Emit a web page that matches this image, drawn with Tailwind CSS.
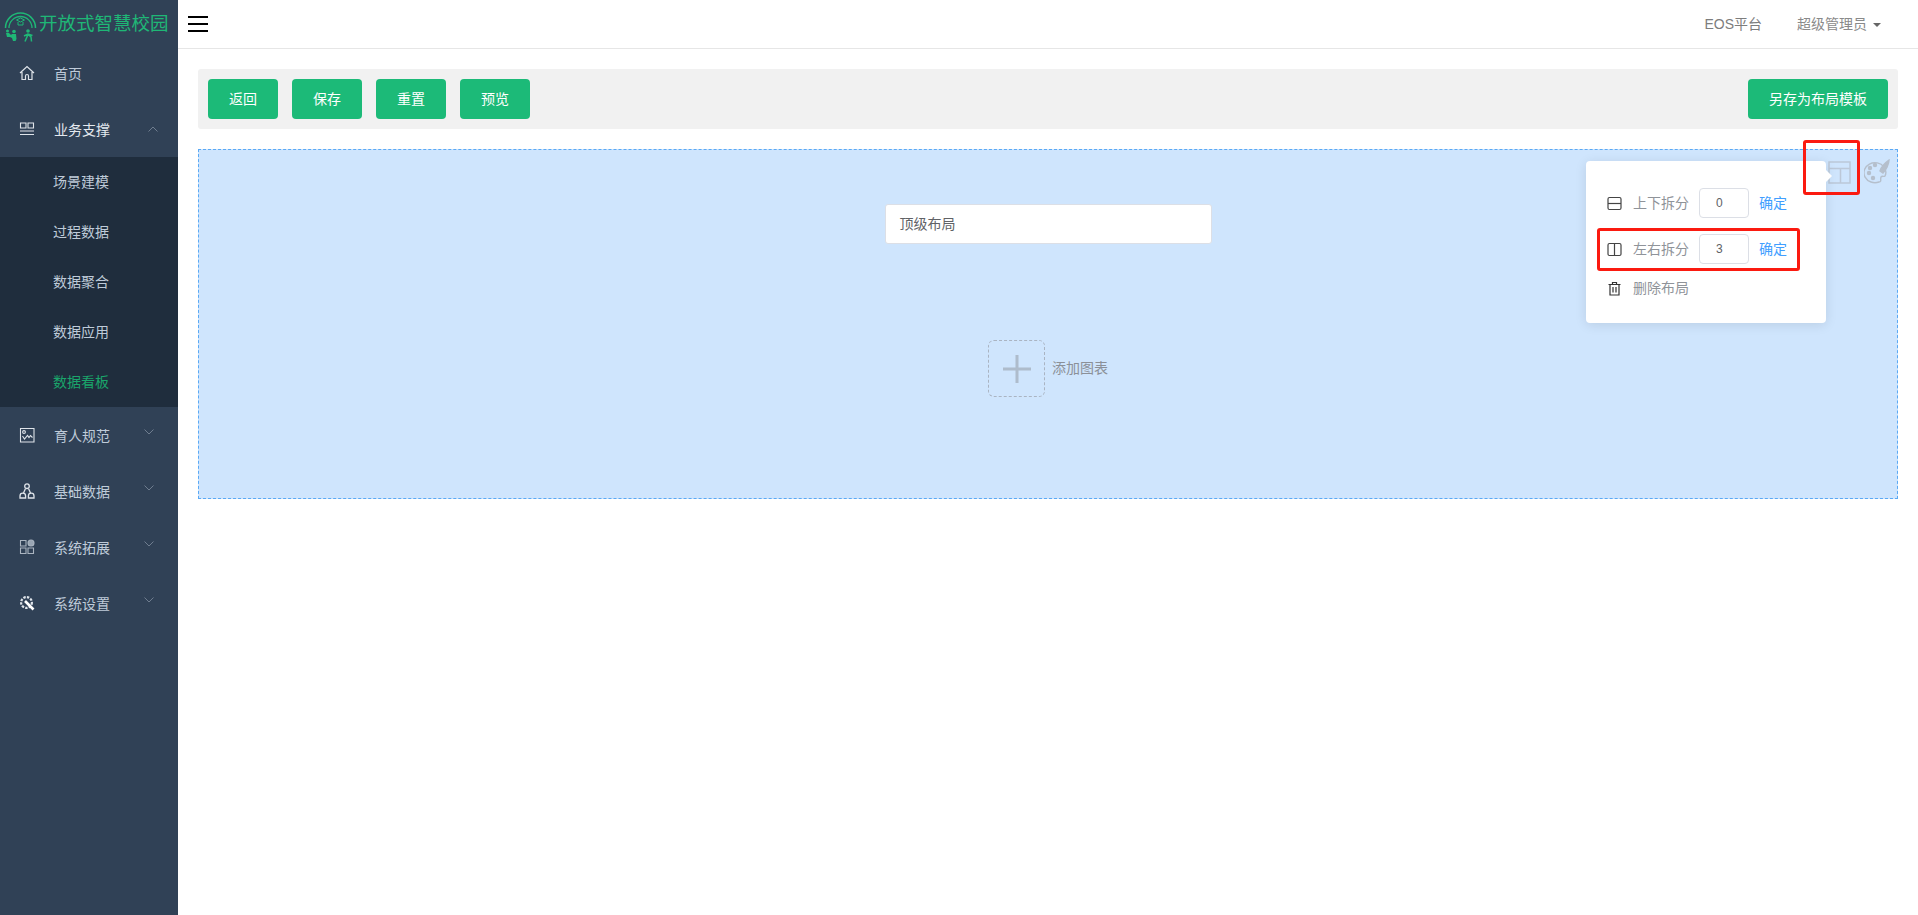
<!DOCTYPE html>
<html lang="zh-CN">

<head>
  <meta charset="UTF-8">
  <title>开放式智慧校园</title>
  <script src="https://cdn.jsdelivr.net/npm/@tailwindcss/browser@4"></script>
</head>

<body class="bg-white font-['Liberation_Sans','Noto_Sans_CJK_SC',sans-serif] text-sm overflow-hidden">
  <div class="flex h-[915px] w-[1918px]">

    <!-- sidebar -->
    <aside class="w-[178px] shrink-0 bg-[#304156] text-[#bfcbd9]">
      <div class="h-[45px] flex items-center pl-1 overflow-hidden">
        <svg class="w-[34px] h-[34px] shrink-0 mt-[5px]" viewBox="0 0 34 34" fill="none" stroke="#1fb776">
          <path d="M1.500 20A15 15 0 1 1 31.500 20" stroke-width="1.500" />
          <path d="M5 20A11.500 11.500 0 1 1 28 20" stroke-width="1.300" />
          <path d="M12.500 12l4-2 4 2-4 2zM14 14v3h5v-3" stroke-width="1" />
          <circle cx="3.500" cy="23" r="1.500" fill="#1fb776" stroke="none" />
          <circle cx="10" cy="23.500" r="1.800" fill="#1fb776" stroke="none" />
          <path d="M2 25h3l2 2 1-1h4l.5 5-1 2H9l-1-3-2-1H3z" fill="#1fb776" stroke="none" />
          <circle cx="24" cy="23" r="1.800" fill="#1fb776" stroke="none" />
          <path d="M21 33.500l3-7 3 2.500 .5 4.500M20 28l4-2 4.500 1.500" stroke-width="1.500" />
        </svg>
        <span class="text-[#1fb776] text-[18.5px] leading-none whitespace-nowrap ml-[1px] mt-[3px]">开放式智慧校园</span>
      </div>

      <a class="h-14 flex items-center pl-[19px]">
        <svg class="w-[16px] h-[16px] mr-[19px]" viewBox="0 0 16 16" fill="none" stroke="#dfe4ea" stroke-width="1.2">
          <path d="M1 8l7-6.500L15 8M3 7v7.500h3.500V11a1.500 1.500 0 0 1 3 0v3.500H13V7" />
        </svg>
        <span class="pt-[2px]">首页</span>
      </a>

      <a class="h-14 flex items-center pl-[19px] relative text-[#e4e9ef]">
        <svg class="w-[16px] h-[16px] mr-[19px]" viewBox="0 0 16 16" fill="none" stroke="#dfe4ea" stroke-width="1.1">
          <path d="M1.500 2h5.500v5H1.500zM9 2h5.500v5H9zM1 10h14M1 13.500h14" />
        </svg>
        <span class="pt-[2px]">业务支撑</span>
        <svg class="absolute left-[148px] top-[25px] w-[10px] h-[6px]" viewBox="0 0 10 6" fill="none" stroke="#6f7d8f" stroke-width="1">
          <path d="M.5 5.500L5 1l4.500 4.500" />
        </svg>
      </a>

      <div class="bg-[#1f2d3d]">
        <a class="h-[50px] flex items-center pl-[53px]">场景建模</a>
        <a class="h-[50px] flex items-center pl-[53px]">过程数据</a>
        <a class="h-[50px] flex items-center pl-[53px]">数据聚合</a>
        <a class="h-[50px] flex items-center pl-[53px]">数据应用</a>
        <a class="h-[50px] flex items-center pl-[53px] text-[#1aa56b]">数据看板</a>
      </div>

      <a class="h-14 flex items-center pl-[19px] relative">
        <svg class="w-[16px] h-[16px] mr-[19px]" viewBox="0 0 16 16" fill="none" stroke="#dfe4ea" stroke-width="1.1">
          <path d="M1.500 1.500h13.500v13.500H1.500z" />
          <circle cx="5" cy="5" r="1.400" />
          <path d="M3.500 9l2 3 3-3.500 1.500 2 1.500-2 2 2" />
        </svg>
        <span class="pt-[2px]">育人规范</span>
        <svg class="absolute left-[144px] top-[22px] w-[10px] h-[6px]" viewBox="0 0 10 6" fill="none" stroke="#6f7d8f" stroke-width="1">
          <path d="M.5.500L5 5l4.500-4.500" />
        </svg>
      </a>

      <a class="h-14 flex items-center pl-[19px] relative">
        <svg class="w-[16px] h-[16px] mr-[19px]" viewBox="0 0 16 16" fill="none" stroke="#dfe4ea" stroke-width="1.3">
          <circle cx="8" cy="3.200" r="2.300" />
          <path d="M1 15v-2a2.800 2.800 0 0 1 5.600 0v2zM9.400 15v-2a2.800 2.800 0 0 1 5.600 0v2z" />
          <path d="M6.500 5.500L4.500 10M9.500 5.500l2 4.500" />
        </svg>
        <span class="pt-[2px]">基础数据</span>
        <svg class="absolute left-[144px] top-[22px] w-[10px] h-[6px]" viewBox="0 0 10 6" fill="none" stroke="#6f7d8f" stroke-width="1">
          <path d="M.5.500L5 5l4.500-4.500" />
        </svg>
      </a>

      <a class="h-14 flex items-center pl-[19px] relative">
        <svg class="w-[16px] h-[16px] mr-[19px]" viewBox="0 0 16 16" fill="none" stroke="#aab4c0" stroke-width="1.100">
          <path d="M1.500 1.500h5.500v5.500H1.500zM1.500 9h5.500v5.500H1.500zM9 9h5.500v5.500H9z" />
          <circle cx="12" cy="4" r="3" fill="#9aa6b4" />
        </svg>
        <span class="pt-[2px]">系统拓展</span>
        <svg class="absolute left-[144px] top-[22px] w-[10px] h-[6px]" viewBox="0 0 10 6" fill="none" stroke="#6f7d8f" stroke-width="1">
          <path d="M.5.500L5 5l4.500-4.500" />
        </svg>
      </a>

      <a class="h-14 flex items-center pl-[19px] relative">
        <svg class="w-[16px] h-[16px] mr-[19px]" viewBox="0 0 16 16" fill="none">
          <circle cx="7.500" cy="7.500" r="5.400" stroke="#dfe4ea" stroke-width="2.200" stroke-dasharray="2.400 1.200" />
          <path d="M6 6l8.500 8.500" stroke="#fff" stroke-width="2.600" />
        </svg>
        <span class="pt-[2px]">系统设置</span>
        <svg class="absolute left-[144px] top-[22px] w-[10px] h-[6px]" viewBox="0 0 10 6" fill="none" stroke="#6f7d8f" stroke-width="1">
          <path d="M.5.500L5 5l4.500-4.500" />
        </svg>
      </a>
    </aside>

    <div class="flex-1 min-w-0">
      <!-- top bar -->
      <header class="h-[49px] border-b border-[#e6e6e6] flex items-center justify-between pl-[10px] pr-[37px]">
        <div class="w-5 flex flex-col gap-[5px]">
          <span class="block h-[2px] bg-black"></span>
          <span class="block h-[2px] bg-black"></span>
          <span class="block h-[2px] bg-black"></span>
        </div>
        <div class="flex items-center text-[#8a8a8a]">
          <span class="text-[#7d7d7d]">EOS平台</span>
          <span class="ml-[35px]">超级管理员</span>
          <span class="ml-[6px] mt-[1px] border-x-[4px] border-t-[4px] border-x-transparent border-t-[#666]"></span>
        </div>
      </header>

      <main class="pt-5 pl-5 pr-5">
        <!-- toolbar -->
        <div class="h-[60px] bg-[#f1f1f1] rounded-[3px] flex items-center justify-between px-[10px]">
          <div class="flex gap-[14px]">
            <button class="w-[70px] h-10 bg-[#1cba78] rounded text-white">返回</button>
            <button class="w-[70px] h-10 bg-[#1cba78] rounded text-white">保存</button>
            <button class="w-[70px] h-10 bg-[#1cba78] rounded text-white">重置</button>
            <button class="w-[70px] h-10 bg-[#1cba78] rounded text-white">预览</button>
          </div>
          <button class="w-[140px] h-10 bg-[#1cba78] rounded text-white">另存为布局模板</button>
        </div>

        <!-- layout canvas -->
        <div class="relative mt-5 h-[350px] bg-[#cfe5fd] border border-dashed border-[#5aa9f5] flex flex-col items-center pt-[54px]">
          <div class="w-[327px] h-[40px] bg-white border border-[#dcdfe6] rounded-[3px] flex items-center pl-[14px] text-[#606266]">顶级布局</div>

          <div class="flex items-center mt-[96px]">
            <div class="w-[57px] h-[57px] border border-dashed border-[#aab4c2] rounded-md flex items-center justify-center">
              <svg class="w-[28px] h-[28px]" viewBox="0 0 28 28" stroke="#aebccc" stroke-width="3">
                <path d="M14 0v28M0 14h28" />
              </svg>
            </div>
            <span class="ml-[7px] mb-[2px] text-[#8b9098]">添加图表</span>
          </div>

          <!-- layout and palette icons -->
          <svg class="absolute left-[1629px] top-[11px] w-[23px] h-[23px]" viewBox="0 0 23 23" fill="none" stroke="#bcc8d8" stroke-width="1.500">
            <path d="M1 1h21v21H1zM1 7.500h21M12.500 7.500V22" />
          </svg>
          <svg class="absolute left-[1665px] top-[9px] w-[26px] h-[25px]" viewBox="0 0 26 25" fill="none" stroke="#b5bfcc" stroke-width="1.400">
            <path d="M20 8a11 10 0 1 0-5 15c3 0 1-3 2-5 1-1.500 3 0 4-1 1-2 1-5 0-7" />
            <circle cx="6" cy="9" r="1.500" fill="#b5bfcc" />
            <circle cx="11" cy="6" r="1.500" fill="#b5bfcc" />
            <circle cx="5" cy="14" r="1.500" fill="#b5bfcc" />
            <circle cx="9" cy="19" r="1.500" fill="#b5bfcc" />
            <path d="M25 1c-3 2-8 7-9 11l3 2c3-3 6-9 6-13z" fill="#b5bfcc" />
          </svg>

          <!-- split popover -->
          <div class="absolute left-[1387px] top-[11px] w-[240px] h-[162px] bg-white rounded shadow-[0_2px_12px_rgba(0,0,0,0.1)] text-[#8f9399]">
            <span class="absolute -right-[6px] top-[9px] border-y-[6px] border-l-[6px] border-y-transparent border-l-white"></span>

            <div class="absolute left-[21px] top-[27px] flex items-center h-[30px]">
              <svg class="w-[15px] h-[15px] mr-[11px]" viewBox="0 0 15 15" fill="none" stroke="#444" stroke-width="1.200">
                <rect x="1" y="1.500" width="13" height="12" rx="1.500" />
                <path d="M1 7.500h13" />
              </svg>
              <span>上下拆分</span>
              <span class="ml-[10px] w-[50px] h-[30px] border border-[#dcdfe6] rounded text-[#606266] text-xs flex items-center pl-[16px]">0</span>
              <span class="ml-[10px] text-[#409eff]">确定</span>
            </div>

            <div class="absolute left-[21px] top-[73px] flex items-center h-[30px]">
              <svg class="w-[15px] h-[15px] mr-[11px]" viewBox="0 0 15 15" fill="none" stroke="#444" stroke-width="1.200">
                <rect x="1" y="1.500" width="13" height="12" rx="1.500" />
                <path d="M7.500 1.500v12" />
              </svg>
              <span>左右拆分</span>
              <span class="ml-[10px] w-[50px] h-[30px] border border-[#dcdfe6] rounded text-[#606266] text-xs flex items-center pl-[16px]">3</span>
              <span class="ml-[10px] text-[#409eff]">确定</span>
            </div>

            <div class="absolute left-[21px] top-[112px] flex items-center h-[30px]">
              <svg class="w-[15px] h-[15px] mr-[11px]" viewBox="0 0 15 15" fill="none" stroke="#333" stroke-width="1.200">
                <path d="M1.500 3.500h12M5.500 3.500V1.500h4v2M3 3.500V14h9V3.500M6 6v5.500M9 6v5.500" />
              </svg>
              <span>删除布局</span>
            </div>
          </div>

          <!-- red marks drawn on the screenshot -->
          <div class="absolute left-[1604px] top-[-10px] w-[57px] h-[55px] border-[3px] border-[#fb1a10] rounded-[3px]"></div>
          <div class="absolute left-[1398px] top-[78px] w-[203px] h-[43px] border-[3px] border-[#fb1a10] rounded-[3px]"></div>
        </div>
      </main>
    </div>
  </div>
</body>
</html>
